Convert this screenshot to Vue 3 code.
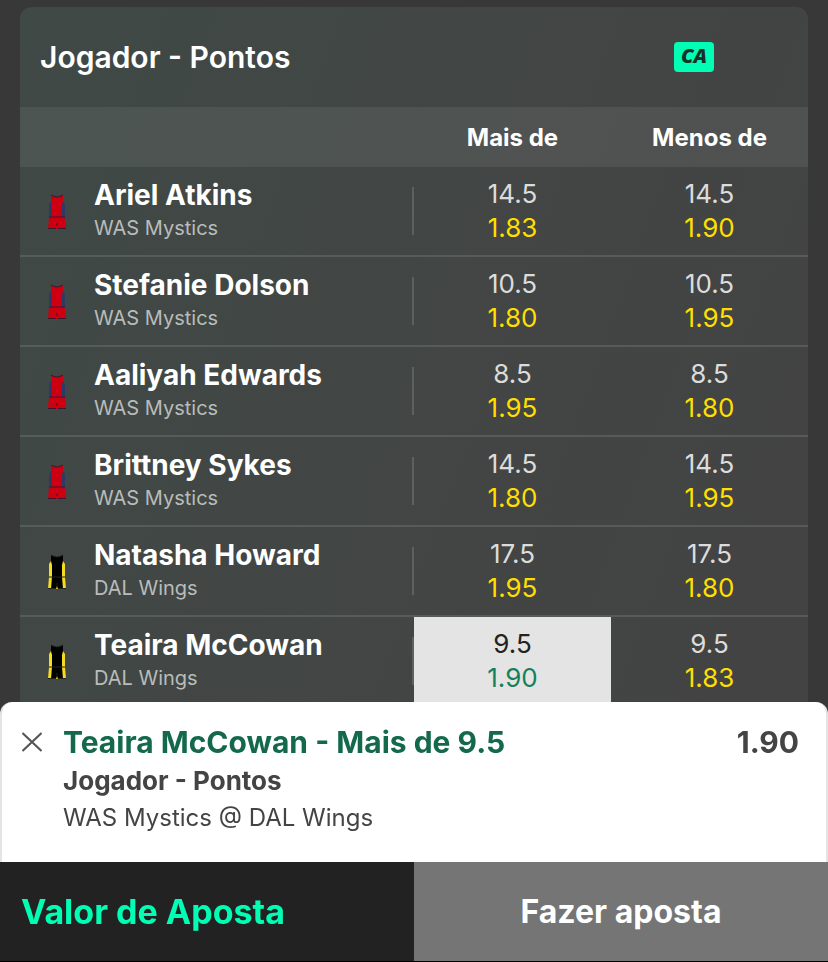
<script setup>
import { ref } from 'vue'

const players = [
  { name: 'Ariel Atkins', team: 'WAS Mystics', kit: 'was', line: '14.5', over: '1.83', under: '1.90' },
  { name: 'Stefanie Dolson', team: 'WAS Mystics', kit: 'was', line: '10.5', over: '1.80', under: '1.95' },
  { name: 'Aaliyah Edwards', team: 'WAS Mystics', kit: 'was', line: '8.5', over: '1.95', under: '1.80' },
  { name: 'Brittney Sykes', team: 'WAS Mystics', kit: 'was', line: '14.5', over: '1.80', under: '1.95' },
  { name: 'Natasha Howard', team: 'DAL Wings', kit: 'dal', line: '17.5', over: '1.95', under: '1.80' },
  { name: 'Teaira McCowan', team: 'DAL Wings', kit: 'dal', line: '9.5', over: '1.90', under: '1.83' },
]

const picked = ref({ player: 5, side: 'over' })
const stake = ref('')

const isPicked = (i, side) => picked.value.player === i && picked.value.side === side
const pick = (i, side) => { picked.value = { player: i, side } }
</script>

<template>
  <main class="page">
    <section class="market">
      <header class="market-head">
        <h1 class="market-title">Jogador - Pontos</h1>
        <div class="badge-slot"><span class="badge">CA</span></div>
      </header>
      <table class="lines">
        <thead>
          <tr>
            <td class="col-player"></td>
            <th scope="col">Mais de</th>
            <th scope="col">Menos de</th>
          </tr>
        </thead>
        <tbody>
          <tr v-for="(p, i) in players" :key="p.name">
            <td>
              <div class="player">
                <svg class="kit" :class="p.kit" viewBox="0 0 20 36" aria-hidden="true">
                  <path class="side" d="M4 8 L2 11 V24 H18 V11 L16 8 Z" />
                  <path class="body" d="M4 2 L6 3 Q10 5 14 3 L16 2 V8 L15 12 V24 H5 V12 L4 8 Z" />
                  <path class="leg" d="M2 24 H18 L19 36 H1 Z" />
                  <path class="body" d="M5 24 H15 L16 36 H11 L10 33 L9 36 H4 Z" />
                  <path class="trim" d="M4 2 L6 3 Q10 5 14 3 L16 2 M2 24 H18 M10 30 V33 M1 35.5 H9 M11 35.5 H19" />
                </svg>
                <div class="who">
                  <span class="name">{{ p.name }}</span>
                  <span class="team">{{ p.team }}</span>
                </div>
                <span class="divider"></span>
              </div>
            </td>
            <td>
              <button type="button" class="odds" :class="{ picked: isPicked(i, 'over') }" @click="pick(i, 'over')">
                <span class="line">{{ p.line }}</span>
                <span class="price">{{ p.over }}</span>
              </button>
            </td>
            <td>
              <button type="button" class="odds" :class="{ picked: isPicked(i, 'under') }" @click="pick(i, 'under')">
                <span class="line">{{ p.line }}</span>
                <span class="price">{{ p.under }}</span>
              </button>
            </td>
          </tr>
        </tbody>
      </table>
    </section>

    <aside class="slip">
      <div class="selection">
        <button type="button" class="close" aria-label="Remover">
          <svg viewBox="0 0 20 20" aria-hidden="true"><path d="M0.5 1 L19.5 19 M19.5 1 L0.5 19" /></svg>
        </button>
        <div class="details">
          <h2 class="pick-name">Teaira McCowan - Mais de 9.5</h2>
          <p class="pick-market">Jogador - Pontos</p>
          <p class="pick-match">WAS Mystics @ DAL Wings</p>
        </div>
        <span class="pick-price">1.90</span>
      </div>
      <div class="actions">
        <input v-model="stake" class="stake" type="text" inputmode="decimal" placeholder="Valor de Aposta" aria-label="Valor de Aposta" />
        <button type="button" class="place">Fazer aposta</button>
      </div>
    </aside>
  </main>
</template>

<style>
body {
  background: #383838;
}
</style>

<style scoped>
.page {
  box-sizing: border-box;
  min-height: 100vh;
  padding: 7px 20px 0;
  font-family: Inter, "Liberation Sans", sans-serif;
  color: #fff;
}
button,
input {
  margin: 0;
  border: 0;
  border-radius: 0;
  font-family: inherit;
}
.market {
  border-radius: 12px 12px 0 0;
  overflow: hidden;
  background: linear-gradient(110deg, #3f4946 0%, #424644 50%, #434343 90%);
}
.market-head {
  display: flex;
  align-items: center;
  height: 100px;
  padding-left: 20px;
}
.market-title {
  flex: 1;
  margin: 0;
  font-size: 30px;
  line-height: 36px;
  font-weight: 600;
}
.badge-slot {
  flex: 0 0 228px;
  display: flex;
  justify-content: center;
}
.badge {
  width: 40px;
  height: 30px;
  border-radius: 4px;
  background: #00ffb4;
  color: #16302a;
  font-family: "Open Sans", sans-serif;
  font-size: 20px;
  font-weight: 800;
  font-style: italic;
  line-height: 28px;
  text-align: center;
}
.lines {
  width: 100%;
  border-collapse: collapse;
  table-layout: fixed;
}
.lines td,
.lines th {
  padding: 0;
}
.col-player {
  width: 50%;
}
.lines thead {
  background: rgba(255, 255, 255, 0.07);
}
.lines th {
  height: 60px;
  font-size: 24px;
  font-weight: 700;
}
.player {
  display: flex;
  align-items: center;
  height: 88px;
  padding-left: 27px;
  border-bottom: 2px solid #565c59;
}
.kit {
  width: 20px;
  height: 36px;
}
.kit .trim {
  fill: none;
  stroke-width: 1;
}
.was .side { fill: #2c3a68; }
.was .body,
.was .leg { fill: #cc0010; }
.was .trim { stroke: #3a1830; }
.dal .side,
.dal .leg { fill: #f5dc1e; }
.dal .body { fill: #000; }
.dal .trim { stroke: #222; }
.who {
  flex: 1;
  display: flex;
  flex-direction: column;
  padding-left: 27px;
}
.name {
  font-size: 28px;
  line-height: 34px;
  font-weight: 700;
}
.team {
  font-size: 20px;
  line-height: 32px;
  color: #b9bcba;
}
.divider {
  width: 2px;
  height: 48px;
  background: #5c615f;
}
.odds {
  display: flex;
  flex-direction: column;
  align-items: center;
  justify-content: center;
  width: 100%;
  height: 90px;
  padding: 0;
  border-bottom: 2px solid #565a58;
  background: none;
  font-size: 26px;
  line-height: 34px;
}
.line {
  color: #dcdcdc;
}
.price {
  color: #ffdf00;
}
.picked {
  background: #e4e4e4;
}
.picked .line {
  color: #222;
}
.picked .price {
  color: #14805e;
}
.slip {
  position: fixed;
  left: 0;
  right: 0;
  bottom: 0;
  border-bottom: 1px solid #000;
}
.selection {
  display: flex;
  align-items: flex-start;
  height: 140px;
  padding: 20px 27px 0 20px;
  border: solid #e4e4e4;
  border-width: 0 2px;
  border-radius: 12px 12px 0 0;
  background: #fff;
  color: #444;
}
.close {
  display: flex;
  flex: 0 0 20px;
  height: 40px;
  align-items: center;
  padding: 0;
  background: none;
}
.close svg {
  width: 20px;
  height: 20px;
}
.close path {
  fill: none;
  stroke: #555;
  stroke-width: 2;
}
.details {
  flex: 1;
  padding-left: 21px;
}
.pick-name,
.pick-market,
.pick-match {
  margin: 0;
}
.pick-name,
.pick-price {
  font-size: 30px;
  line-height: 40px;
  font-weight: 700;
}
.pick-name {
  color: #14694c;
}
.pick-market {
  font-size: 26px;
  line-height: 38px;
  font-weight: 700;
}
.pick-match {
  font-size: 24px;
  line-height: 36px;
}
.actions {
  display: grid;
  grid-template-columns: 1fr 1fr;
  height: 99px;
}
.stake {
  min-width: 0;
  padding: 0 21px;
  background: #222;
  color: #00ffb4;
  font-size: 34px;
  font-weight: 700;
  outline: none;
}
.stake::placeholder {
  color: #00ffb4;
  opacity: 1;
}
.place {
  background: #757575;
  color: #fff;
  font-size: 32px;
  font-weight: 700;
}
</style>
